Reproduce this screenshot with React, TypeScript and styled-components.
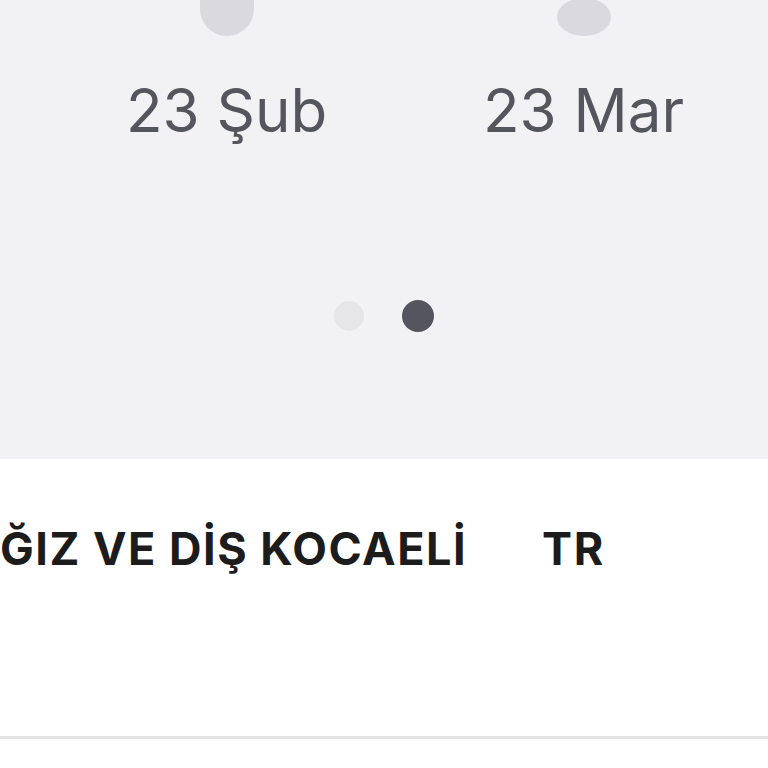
import React from "react";
import styled, { createGlobalStyle } from "styled-components";

const Global = createGlobalStyle`
  html, body { margin: 0; padding: 0; background: #ffffff; }
  body { font-family: "Inter", "Noto Sans", sans-serif; }
`;

const Page = styled.div`
  width: 768px;
  height: 768px;
  overflow: hidden;
  display: flex;
  flex-direction: column;
  background: #ffffff;
`;

const ChartPanel = styled.section`
  height: 459px;
  flex: none;
  background: #f2f2f5;
  display: flex;
  flex-direction: column;
`;

const Columns = styled.div`
  display: grid;
  grid-template-columns: 357px 357px;
  padding-left: 48px;
`;

const Column = styled.div`
  display: flex;
  flex-direction: column;
  align-items: center;
`;

const BarSlot = styled.div`
  height: 36px;
  display: flex;
  align-items: flex-end;
`;

const Bar = styled.div<{ $h: number }>`
  width: 54px;
  height: ${(p) => p.$h}px;
  border-radius: 27px / ${(p) => Math.min(27, p.$h / 2)}px;
  background: #dadade;
`;

const DateLabel = styled.div`
  margin-top: 34px;
  font-family: "Inter", "Noto Sans", sans-serif;
  font-size: 60px;
  font-weight: 400;
  line-height: 80px;
  color: #55555d;
  white-space: nowrap;
`;

const Dots = styled.div`
  margin-top: 150px;
  display: flex;
  justify-content: center;
  align-items: center;
  gap: 38px;
`;

const Dot = styled.span<{ $active?: boolean }>`
  width: ${(p) => (p.$active ? 32 : 30)}px;
  height: ${(p) => (p.$active ? 32 : 30)}px;
  border-radius: 50%;
  background: ${(p) => (p.$active ? "#55555f" : "#e6e6e9")};
`;

const FooterNav = styled.nav`
  flex: 1;
  display: flex;
  flex-direction: column;
  border-bottom: 3px solid #e3e3e3;
  margin-bottom: 29px;
`;

const NavRow = styled.div`
  margin-top: 62px;
  display: flex;
  align-items: baseline;
  gap: 75px;
  white-space: nowrap;
`;

const NavItem = styled.span`
  font-family: "Inter", "Noto Sans", sans-serif;
  font-size: 45px;
  font-weight: 700;
  line-height: 56px;
  letter-spacing: 1.5px;
  color: #1c1c1c;
`;

export default function App() {
  return (
    <>
      <Global />
      <Page>
        <ChartPanel>
          <Columns>
            <Column>
              <BarSlot>
                <Bar $h={70} />
              </BarSlot>
              <DateLabel>23 Şub</DateLabel>
            </Column>
            <Column>
              <BarSlot>
                <Bar $h={38} />
              </BarSlot>
              <DateLabel>23 Mar</DateLabel>
            </Column>
          </Columns>
          <Dots>
            <Dot />
            <Dot $active />
          </Dots>
        </ChartPanel>
        <FooterNav>
          <NavRow>
            <NavItem>ĞIZ VE DİŞ KOCAELİ</NavItem>
            <NavItem>TR</NavItem>
          </NavRow>
        </FooterNav>
      </Page>
    </>
  );
}
